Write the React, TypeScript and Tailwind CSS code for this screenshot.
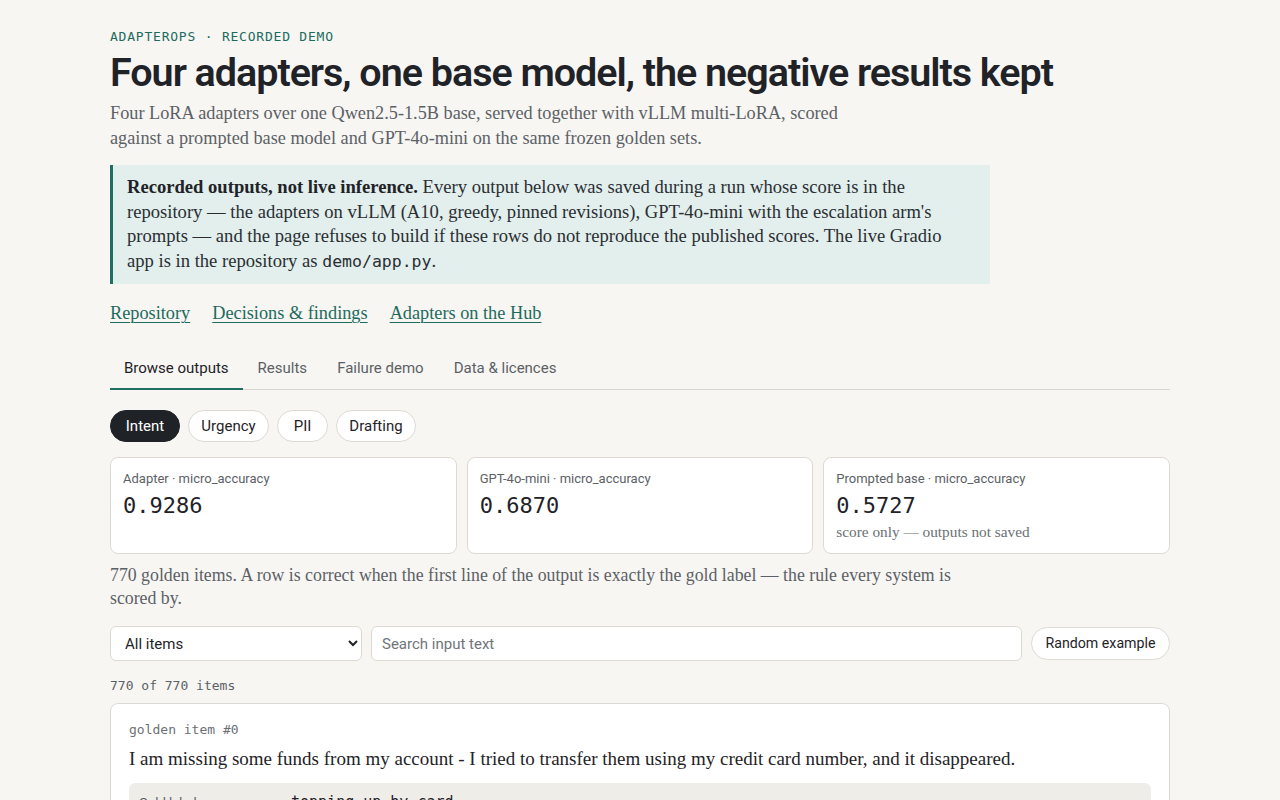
import React from "react";

const sans = "font-['Roboto','Noto_Sans',sans-serif]";
const serif = "font-['Liberation_Serif','DejaVu_Serif',serif]";
const mono = "font-['DejaVu_Sans_Mono','Liberation_Mono',monospace]";

export default function App() {
  const tabs = ["Browse outputs", "Results", "Failure demo", "Data & licences"];
  const pills = [
    { t: "Intent", w: "w-[70px]" },
    { t: "Urgency", w: "w-[81px]" },
    { t: "PII", w: "w-[51px]" },
    { t: "Drafting", w: "w-[80px]" },
  ];
  const cards = [
    { label: "Adapter · micro_accuracy", value: "0.9286", note: "" },
    { label: "GPT-4o-mini · micro_accuracy", value: "0.6870", note: "" },
    { label: "Prompted base · micro_accuracy", value: "0.5727", note: "score only — outputs not saved" },
  ];
  return (
    <div className={`min-h-screen bg-[#f7f6f3] text-[#1f2328] ${serif}`}>
      <div className="mx-auto w-[1060px] pt-[28px]">
        <div className={`${mono} text-[13px] tracking-[0.06em] text-[#1d6b5e] leading-[18px]`}>
          ADAPTEROPS · RECORDED DEMO
        </div>
        <h1 className={`${sans} mt-[3px] text-[39.5px] leading-[48px] font-semibold tracking-[-0.026em] text-[#1f2328]`}>
          Four adapters, one base model, the negative results kept
        </h1>
        <p className="mt-[4px] max-w-[780px] text-[18.25px] leading-[25px] text-[#5c6166]">
          Four LoRA adapters over one Qwen2.5-1.5B base, served together with vLLM multi-LoRA, scored against a
          prompted base model and GPT-4o-mini on the same frozen golden sets.
        </p>
        <div className="mt-[14px] w-[880px] border-l-[3px] border-[#1f6f62] bg-[#e2efec] pl-[14px] pr-[20px] pt-[10px] pb-[9px] text-[18.6px] leading-[24.7px] text-[#2a2e33]">
          <b className="font-bold text-[#1f2328]">Recorded outputs, not live inference.</b> Every output below was
          saved during a run whose score is in the repository — the adapters on vLLM (A10, greedy, pinned
          revisions), GPT-4o-mini with the escalation arm's prompts — and the page refuses to build if these rows do
          not reproduce the published scores. The live Gradio app is in the repository as{" "}
          <code className={`${mono} text-[16.5px]`}>demo/app.py</code>.
        </div>
        <div className="mt-[17px] flex gap-[22px] text-[18.3px] leading-[24px]">
          {["Repository", "Decisions & findings", "Adapters on the Hub"].map((l) => (
            <a key={l} href="#" className="text-[#1d6b5e] underline underline-offset-[3px] decoration-1">
              {l}
            </a>
          ))}
        </div>
        <div className={`${sans} mt-[24px] flex border-b border-[#d9d6d0] text-[15px]`}>
          {tabs.map((t, i) => (
            <div
              key={t}
              className={
                i === 0
                  ? "px-[14px] pt-[8px] pb-[9px] -mb-px border-b-2 border-[#1f6f62] text-[#1f2328]"
                  : "px-[15px] pt-[8px] pb-[9px] text-[#5c6166]"
              }
            >
              {t}
            </div>
          ))}
        </div>
        <div className={`${sans} mt-[20px] flex gap-[8px] text-[15px]`}>
          {pills.map((p, i) => (
            <div
              key={p.t}
              className={
                i === 0
                  ? `${p.w} h-[32px] flex items-center justify-center rounded-full bg-[#1f2328] text-white border border-[#1f2328]`
                  : `${p.w} h-[32px] flex items-center justify-center rounded-full bg-white text-[#1f2328] border border-[#dedad3]`
              }
            >
              {p.t}
            </div>
          ))}
        </div>
        <div className="mt-[15px] grid grid-cols-3 gap-[10px]">
          {cards.map((c) => (
            <div key={c.label} className="h-[97px] rounded-lg border border-[#dedad3] bg-white px-[12px] pt-[12px]">
              <div className={`${sans} text-[13px] leading-[18px] text-[#5c6166]`}>{c.label}</div>
              <div className={`${mono} mt-[4px] text-[22px] leading-[28px] text-[#1f2328]`}>{c.value}</div>
              {c.note && <div className="mt-[2px] text-[15.3px] leading-[20px] text-[#6b7075]">{c.note}</div>}
            </div>
          ))}
        </div>
        <p className="mt-[10px] max-w-[860px] text-[17.8px] leading-[23px] text-[#5c6166]">
          770 golden items. A row is correct when the first line of the output is exactly the gold label — the rule
          every system is scored by.
        </p>
        <div className={`${sans} mt-[16px] flex gap-[9px] text-[15px]`}>
          <select className="h-[35px] w-[252px] rounded-md border border-[#dedad3] bg-white pl-[10px] pr-[6px] text-[#1f2328]">
            <option>All items</option>
          </select>
          <input
            placeholder="Search input text"
            className="h-[35px] flex-1 rounded-md border border-[#dedad3] bg-white px-[10px] placeholder-[#70757a] outline-none"
          />
          <button className="h-[33px] w-[139px] mt-[1px] rounded-full border border-[#dedad3] bg-white text-[14.2px] text-[#1f2328]">
            Random example
          </button>
        </div>
        <div className={`${mono} mt-[16px] text-[13px] leading-[18px] text-[#5c6166]`}>770 of 770 items</div>
        <div className="mt-[8px] rounded-lg border border-[#dedad3] bg-white px-[18px] pt-[17px] pb-[18px]">
          <div className={`${mono} text-[13px] leading-[18px] text-[#6b7075]`}>golden item #0</div>
          <div className="mt-[7px] text-[19px] leading-[26px] text-[#1f2328]">
            I am missing some funds from my account - I tried to transfer them using my credit card number, and it
            disappeared.
          </div>
          <div className="mt-[11px] rounded-md bg-[#efede8] px-[10px] py-[8px]">
            <div className="flex items-baseline">
              <div className={`${sans} w-[152px] text-[13px] text-[#5c6166]`}>Gold label</div>
              <div className={`${mono} text-[15px] text-[#1f2328]`}>topping_up_by_card</div>
            </div>
            <div className="flex items-baseline mt-[6px]">
              <div className={`${sans} w-[152px] text-[13px] text-[#5c6166]`}>Adapter output</div>
              <div className={`${mono} text-[15px] text-[#1f2328]`}>topping_up_by_card</div>
            </div>
          </div>
        </div>
        <div className="h-[40px]" />
      </div>
    </div>
  );
}
